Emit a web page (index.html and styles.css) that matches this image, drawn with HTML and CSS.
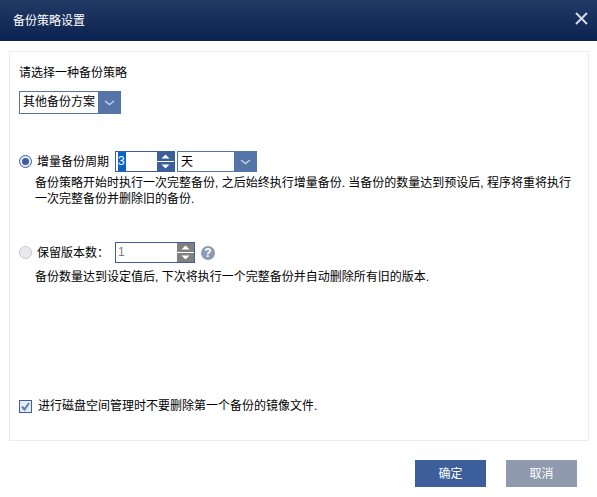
FILE: index.html
```html
<!DOCTYPE html>
<html lang="zh-CN">
<head>
  <meta charset="UTF-8">
  <title>备份策略设置</title>
  <link rel="stylesheet" href="styles.css">
</head>
<body>
  <div class="titlebar">
    <span class="title">备份策略设置</span>
    <svg class="close" width="13" height="13" viewBox="0 0 13 13"><path d="M1 1L12 12M12 1L1 12" stroke="#d5dbe6" stroke-width="2" fill="none"/></svg>
  </div>

  <div class="panel">
    <div class="prompt">请选择一种备份策略</div>
    <div class="select scheme">
      <span class="select-text">其他备份方案</span>
      <span class="select-arrow"><svg width="11" height="6" viewBox="0 0 11 6"><path d="M1 1L5.5 4.5L10 1" stroke="#c5d0e2" stroke-width="1.4" fill="none"/></svg></span>
    </div>

    <div class="option first-option">
      <span class="radio checked"><span class="radio-dot"></span></span>
      <span class="option-label">增量备份周期</span>
      <div class="spinner period">
        <span class="spinner-text"><span class="selected-num">3</span></span>
        <span class="spinner-btns">
          <span class="spin-btn"><svg width="9" height="5" viewBox="0 0 9 5"><path d="M0.5 4.5L4.5 0.5L8.5 4.5Z" fill="#fff"/></svg></span>
          <span class="spin-btn"><svg width="9" height="5" viewBox="0 0 9 5"><path d="M0.5 0.5L4.5 4.5L8.5 0.5Z" fill="#fff"/></svg></span>
        </span>
      </div>
      <div class="select unit">
        <span class="select-text">天</span>
        <span class="select-arrow"><svg width="11" height="6" viewBox="0 0 11 6"><path d="M1 1L5.5 4.5L10 1" stroke="#c5d0e2" stroke-width="1.4" fill="none"/></svg></span>
      </div>
    </div>
    <p class="desc">备份策略开始时执行一次完整备份, 之后始终执行增量备份. 当备份的数量达到预设后, 程序将重将执行一次完整备份并删除旧的备份.</p>

    <div class="option second-option">
      <span class="radio"></span>
      <span class="option-label">保留版本数：</span>
      <div class="spinner disabled">
        <span class="spinner-text">1</span>
        <span class="spinner-btns">
          <span class="spin-btn"><svg width="9" height="5" viewBox="0 0 9 5"><path d="M0.5 4.5L4.5 0.5L8.5 4.5Z" fill="#fff"/></svg></span>
          <span class="spin-btn"><svg width="9" height="5" viewBox="0 0 9 5"><path d="M0.5 0.5L4.5 4.5L8.5 0.5Z" fill="#fff"/></svg></span>
        </span>
      </div>
      <span class="help">?</span>
    </div>
    <p class="desc second-desc">备份数量达到设定值后, 下次将执行一个完整备份并自动删除所有旧的版本.</p>

    <label class="keep-first">
      <svg class="checkbox" width="13" height="13" viewBox="0 0 13 13">
        <rect x="0.5" y="0.5" width="12" height="12" fill="#e6ebf3" stroke="#3c5f9c"/>
        <path d="M3 6.5L5.5 9.5L10 3" stroke="#5a80b8" stroke-width="2" fill="none"/>
      </svg>
      <span>进行磁盘空间管理时不要删除第一个备份的镜像文件.</span>
    </label>
  </div>

  <div class="actions">
    <button class="btn primary">确定</button>
    <button class="btn muted">取消</button>
  </div>
</body>
</html>
```

FILE: styles.css
```css
body {
  margin: 0;
  width: 597px;
  height: 497px;
  overflow: hidden;
  background: #fff;
  color: #000;
  font-family: "Liberation Sans", "Noto Sans CJK SC", sans-serif;
  font-size: 12px;
  line-height: 16px;
}

.titlebar {
  height: 41px;
  padding: 0 9px 0 13px;
  display: flex;
  align-items: center;
  justify-content: space-between;
  background: linear-gradient(180deg, #223a64, #0b2250);
}

.title {
  color: #fff;
  font-size: 12px;
}

.close {
  margin-bottom: 4px;
}

.panel {
  box-sizing: border-box;
  width: 580px;
  height: 390px;
  margin: 10px 0 0 9px;
  padding: 13px 8px 0 9px;
  border: 1px solid #ececee;
  display: flex;
  flex-direction: column;
}

.prompt {
  height: 16px;
}

.select {
  display: flex;
  box-sizing: border-box;
  border: 1px solid #5575a8;
  background: #fff;
}

.scheme {
  width: 102px;
  height: 23px;
  margin-top: 10px;
}

.unit {
  width: 80px;
  height: 21px;
  margin-left: 2px;
}

.select-text {
  flex: 1;
  padding-left: 3px;
  line-height: 20px;
}

.select-arrow {
  width: 22px;
  display: flex;
  align-items: center;
  justify-content: center;
  background: #5575a8;
}

.option {
  display: flex;
  align-items: center;
  height: 21px;
}

.first-option {
  margin-top: 37px;
}

.second-option {
  margin-top: 35px;
}

.radio {
  box-sizing: border-box;
  width: 13px;
  height: 13px;
  border: 1px solid #c8c8cc;
  border-radius: 50%;
  background: #eaeaec;
  display: flex;
  align-items: center;
  justify-content: center;
}

.radio.checked {
  border-color: #3c5f9c;
  background: #e6ebf3;
}

.radio-dot {
  width: 7px;
  height: 7px;
  border-radius: 50%;
  background: #3c5f9c;
}

.option-label {
  width: 78px;
  margin-left: 5px;
}

.spinner {
  box-sizing: border-box;
  width: 60px;
  height: 21px;
  display: flex;
  border: 1px solid #3c5f9c;
}

.spinner.disabled {
  width: 80px;
  color: #7a7a88;
}

.spinner-text {
  flex: 1;
  padding-left: 2px;
  line-height: 19px;
}

.selected-num {
  background: #0a64c8;
  color: #fff;
  display: inline-block;
  width: 8px;
}

.spinner-btns {
  width: 17px;
  display: flex;
  flex-direction: column;
  gap: 1px;
}

.spin-btn {
  flex: 1;
  display: flex;
  align-items: center;
  justify-content: center;
  background: #3c5f9c;
}

.disabled .spin-btn {
  background: #808080;
}

.help {
  width: 14px;
  height: 14px;
  margin-left: 6px;
  border-radius: 50%;
  background: #8c9bb4;
  color: #fff;
  font-size: 12px;
  font-weight: bold;
  line-height: 14px;
  text-align: center;
}

.desc {
  width: 540px;
  margin: 3px 0 0 16px;
}

.second-desc {
  margin-top: 6px;
}

.keep-first {
  display: flex;
  align-items: center;
  gap: 6px;
  margin-top: auto;
  margin-bottom: 26px;
}

.actions {
  display: flex;
  justify-content: flex-end;
  gap: 20px;
  margin: 19px 20px 0 0;
}

.btn {
  width: 71px;
  height: 27px;
  padding: 0;
  border: none;
  color: #fff;
  font: inherit;
}

.primary {
  background: #3c5f9c;
}

.muted {
  background: #8f9aae;
}
```
